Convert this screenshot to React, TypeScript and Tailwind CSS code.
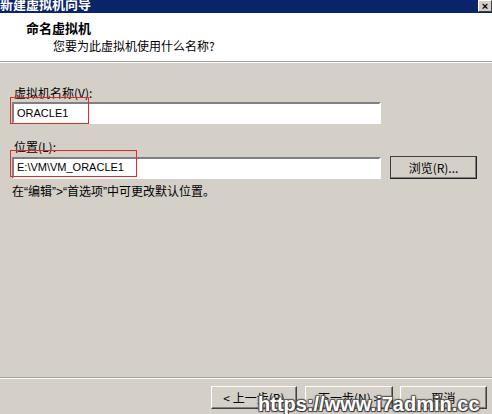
import React from "react";

const cjk = { fontFamily: '"Noto Sans CJK SC", "Liberation Sans", sans-serif' };
const latin = { fontFamily: '"Liberation Sans", "Noto Sans CJK SC", sans-serif' };

function ClassicButton({ children, className = "" }: { children: React.ReactNode; className?: string }) {
  return (
    <div
      className={`flex h-[23px] items-center justify-center border border-b-[#404040] border-l-white border-r-[#404040] border-t-white bg-[#d4d0c8] text-[12px] text-black shadow-[inset_-1px_-1px_0_#808080] ${className}`}
      style={cjk}
    >
      {children}
    </div>
  );
}

function SunkenInput({ value }: { value: string }) {
  return (
    <div className="flex h-[22px] w-[369px] items-center border-2 border-b-white border-l-[#808080] border-r-white border-t-[#808080] bg-white pl-[3px] text-[11px] text-black" style={latin}>
      {value}
    </div>
  );
}

export default function App() {
  return (
    <div className="relative flex h-[414px] w-[492px] flex-col overflow-hidden bg-[#d4d0c8]">
      {/* title bar */}
      <div className="flex h-[13px] items-start justify-between overflow-hidden bg-[#0a246a]">
        <span className="-mt-[5px] text-[13px] font-bold leading-[18px] text-white" style={cjk}>
          新建虚拟机向导
        </span>
        <div className="flex h-[12px] w-[14px] items-center justify-center border border-b-[#404040] border-l-white border-r-[#404040] border-t-white bg-[#d4d0c8] text-[11px] font-bold leading-none text-black" style={latin}>
          ×
        </div>
      </div>

      {/* header */}
      <div className="h-[49px] border-b border-b-[#a0a0a0] bg-white pl-[26px] pt-[7px]">
        <div className="text-[13px] font-bold leading-[16px] text-black" style={cjk}>
          命名虚拟机
        </div>
        <div className="mt-[2px] pl-[27px] text-[12px] leading-[16px] text-black" style={cjk}>
          您要为此虚拟机使用什么名称?
        </div>
      </div>
      <div className="h-px bg-white" />

      {/* body */}
      <div className="flex flex-col px-[12px] pt-[22px] text-[12px] text-black">
        <div className="pl-[2px] leading-[16px]" style={cjk}>
          虚拟机名称(V):
        </div>
        <div className="relative mt-[1px]">
          <SunkenInput value="ORACLE1" />
          <div className="pointer-events-none absolute left-[-2px] top-[-5px] h-[27px] w-[79px] border-[1.5px] border-[#e02b2b]" />
        </div>

        <div className="mt-[15px] pl-[2px] leading-[16px]" style={cjk}>
          位置(L):
        </div>
        <div className="relative mt-[1px] flex items-center">
          <SunkenInput value="E:\VM\VM_ORACLE1" />
          <div className="pointer-events-none absolute left-[-2px] top-[-6px] h-[27px] w-[127px] border-[1.5px] border-[#e02b2b]" />
          <ClassicButton className="ml-[9px] w-[87px] !border-[#202020] !border-l-[#404040] !border-t-[#404040]">
            浏览(R)...
          </ClassicButton>
        </div>
        <div className="mt-[5px] leading-[16px]" style={latin}>
          在“编辑”&gt;“首选项”中可更改默认位置。
        </div>
      </div>

      <div className="flex-1" />

      {/* footer */}
      <div className="h-px bg-[#a0a0a0]" />
      <div className="h-px bg-white" />
      <div className="flex h-[35px] items-start pl-[211px] pt-[7px]">
        <ClassicButton className="w-[86px]">&lt; 上一步(B)</ClassicButton>
        <ClassicButton className="ml-[8px] w-[88px]">下一步(N) &gt;</ClassicButton>
        <ClassicButton className="ml-[7px] w-[87px]">取消</ClassicButton>
      </div>

      {/* watermark */}
      <div
        className="pointer-events-none absolute left-[258px] top-[392px] text-[20px] font-bold leading-[24px] text-white [text-shadow:1px_1px_1px_#333,-1px_-1px_1px_#555,1px_-1px_1px_#555,-1px_1px_1px_#555]"
        style={latin}
      >
        https://www.i7admin.cc
      </div>
    </div>
  );
}
